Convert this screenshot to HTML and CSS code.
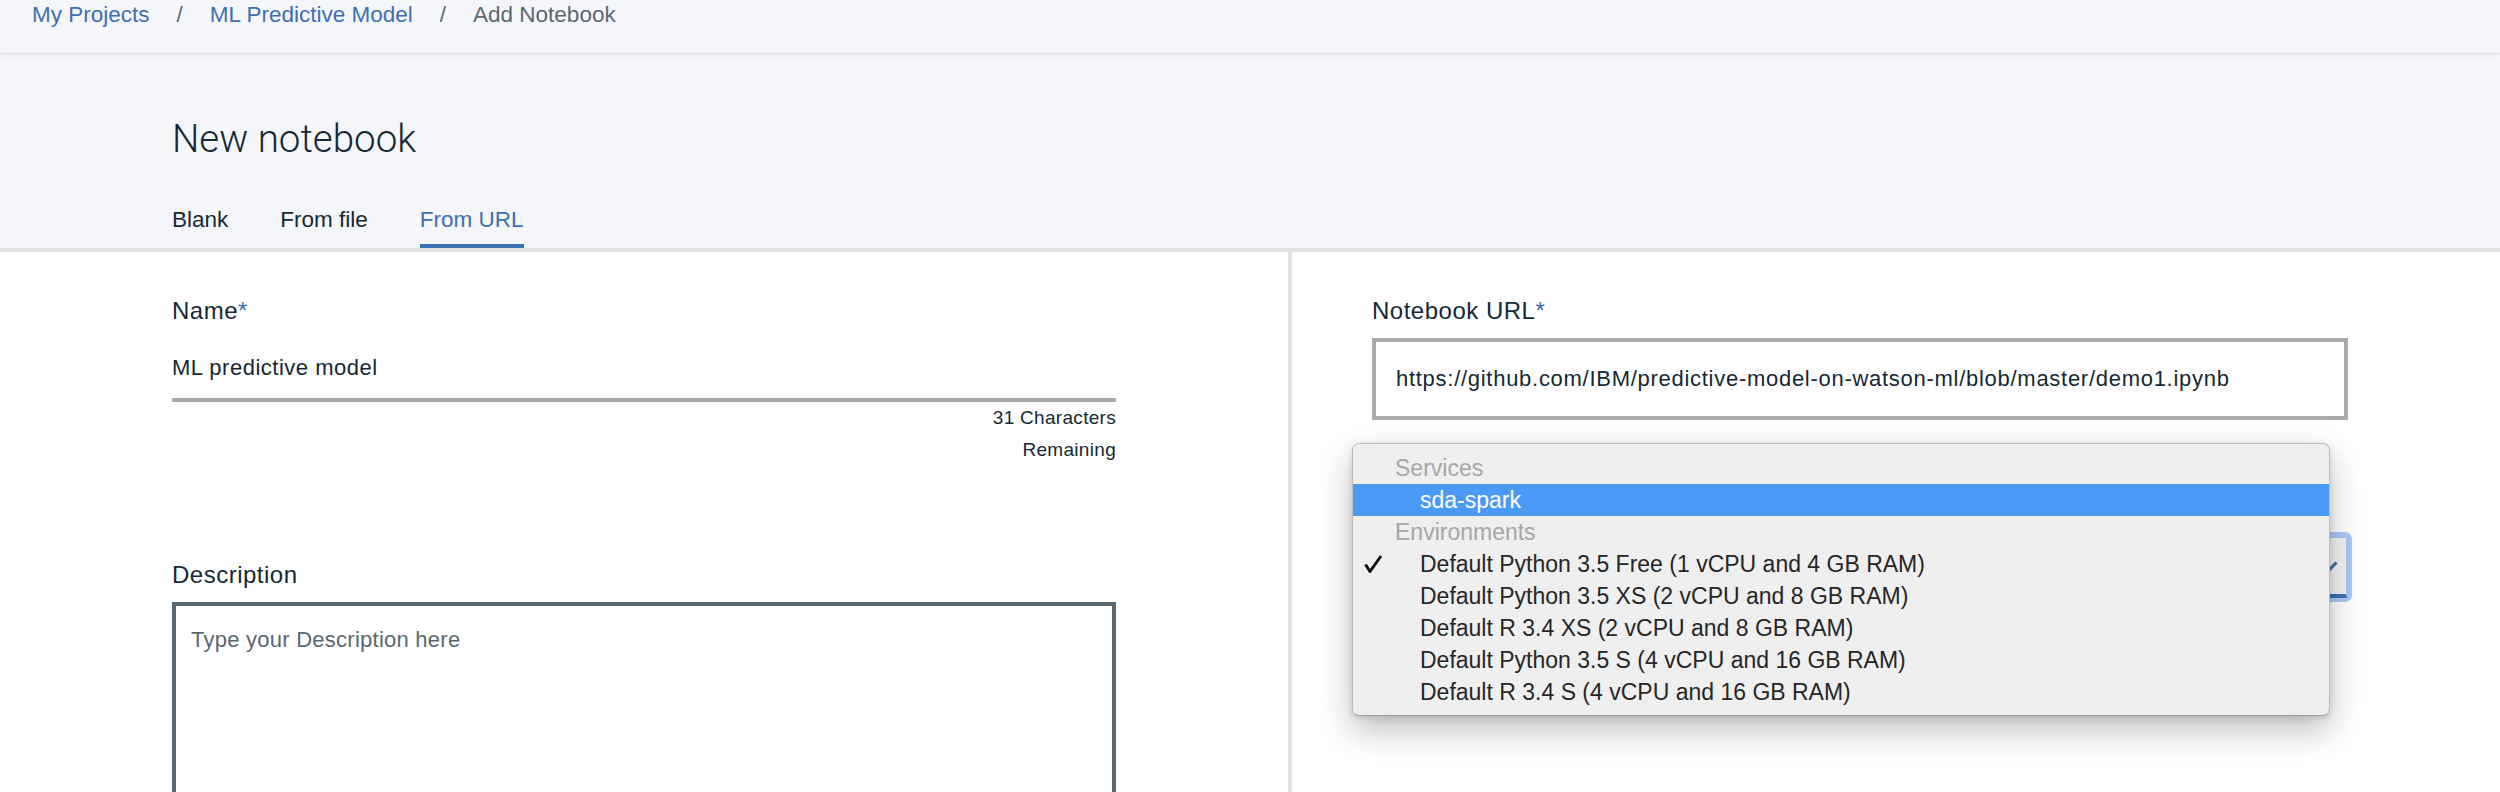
FILE: index.html
```html
<!DOCTYPE html>
<html lang="en">
<head>
<meta charset="utf-8">
<title>Add Notebook</title>
<link rel="stylesheet" href="styles.css">
</head>
<body>
<header class="topbar">
  <nav class="crumbs">
    <a class="crumb-link">My Projects</a><span class="sep">/</span><a class="crumb-link">ML Predictive Model</a><span class="sep">/</span><span class="crumb-current">Add Notebook</span>
  </nav>
</header>
<section class="hero">
  <h1 class="title">New notebook</h1>
  <div class="tabs">
    <div class="tab">Blank</div>
    <div class="tab">From file</div>
    <div class="tab active">From URL</div>
  </div>
</section>
<main class="content">
  <div class="col col-left">
    <div class="label">Name<span class="req">*</span></div>
    <div class="line-input">ML predictive model</div>
    <div class="counter">31 Characters<br>Remaining</div>
    <div class="label desc-label">Description</div>
    <div class="textarea">Type your Description here</div>
  </div>
  <div class="divider"></div>
  <div class="col col-right">
    <div class="label">Notebook URL<span class="req">*</span></div>
    <div class="box-input">https://github.com/IBM/predictive-model-on-watson-ml/blob/master/demo1.ipynb</div>
    <div class="select">
      <svg class="chevron" width="16" height="10" viewBox="0 0 16 10"><polyline points="1.5,1.5 8,8 14.5,1.5" fill="none" stroke="#3d70b2" stroke-width="3"/></svg>
    </div>
    <div class="popup">
      <div class="grp">Services</div>
      <div class="opt selected"><span class="check-cell"></span><span>sda-spark</span></div>
      <div class="grp">Environments</div>
      <div class="opt"><span class="check-cell"><svg class="check" width="19" height="18" viewBox="0 0 19 18"><path d="M1.5 9.5 L6 16.5 L17 1" fill="none" stroke="#111" stroke-width="3" stroke-linejoin="round"/></svg></span><span>Default Python 3.5 Free (1 vCPU and 4 GB RAM)</span></div>
      <div class="opt"><span class="check-cell"></span><span>Default Python 3.5 XS (2 vCPU and 8 GB RAM)</span></div>
      <div class="opt"><span class="check-cell"></span><span>Default R 3.4 XS (2 vCPU and 8 GB RAM)</span></div>
      <div class="opt"><span class="check-cell"></span><span>Default Python 3.5 S (4 vCPU and 16 GB RAM)</span></div>
      <div class="opt"><span class="check-cell"></span><span>Default R 3.4 S (4 vCPU and 16 GB RAM)</span></div>
    </div>
  </div>
</main>
</body>
</html>
```
FILE: styles.css
```css
html, body {
  margin: 0;
  padding: 0;
}
body {
  width: 2500px;
  height: 792px;
  overflow: hidden;
  background: #ffffff;
  font-family: "Liberation Sans", Arial, sans-serif;
  color: #152935;
}

/* Top breadcrumb bar */
.topbar {
  height: 53px;
  background: #f5f6fa;
  border-bottom: 1px solid #dcdee2;
  box-shadow: 0 2px 4px rgba(0, 0, 0, 0.05);
  position: relative;
  z-index: 1;
}
.crumbs {
  padding-left: 32px;
  font-size: 22.5px;
  line-height: 30px;
  white-space: nowrap;
}
.crumb-link {
  color: #3d70b2;
  text-decoration: none;
}
.sep {
  color: #5a6872;
  margin: 0 27px;
}
.crumb-current {
  color: #5a6872;
}

/* Title and tabs area */
.hero {
  background: #f5f6fa;
  padding: 63px 0 0 172px;
  border-bottom: 4px solid #dfe1e5;
}
.title {
  margin: 0;
  font-family: Roboto, "Liberation Sans", sans-serif;
  font-weight: 300;
  font-size: 38.5px;
  line-height: 44px;
  color: #152935;
}
.tabs {
  display: flex;
  gap: 52px;
  margin-top: 45px;
}
.tab {
  font-size: 22.5px;
  line-height: 28px;
  padding-bottom: 10px;
  border-bottom: 4px solid transparent;
  color: #152935;
}
.tab.active {
  color: #3d70b2;
  border-bottom-color: #3d70b2;
}

/* Form content */
.content {
  display: grid;
  grid-template-columns: 1288px 4px 1fr;
  height: 540px;
  overflow: hidden;
}
.col {
  padding-top: 44px;
  box-sizing: border-box;
}
.col-left {
  padding-left: 172px;
  padding-right: 172px;
}
.col-right {
  padding-left: 80px;
  padding-right: 152px;
  position: relative;
}
.divider {
  background: #dfe3e6;
}
.label {
  font-size: 24px;
  line-height: 30px;
  letter-spacing: 0.5px;
  color: #152935;
}
.req {
  color: #3d70b2;
}
.line-input {
  margin-top: 28px;
  font-size: 22px;
  line-height: 28px;
  letter-spacing: 0.5px;
  padding-bottom: 16px;
  border-bottom: 4px solid #aaaaaa;
}
.counter {
  text-align: right;
  font-size: 19px;
  line-height: 32px;
  letter-spacing: 0.3px;
}
.desc-label {
  margin-top: 94px;
}
.textarea {
  margin-top: 12px;
  border: 4px solid #5a6872;
  padding: 20px 15px;
  height: 300px;
  font-size: 22px;
  line-height: 28px;
  letter-spacing: 0.25px;
  color: #5a6872;
}
.box-input {
  margin-top: 12px;
  border: 4px solid #aaaaaa;
  padding: 23px 20px;
  font-size: 22px;
  line-height: 28px;
  letter-spacing: 0.72px;
  white-space: nowrap;
}
.select {
  margin-top: 116px;
  height: 62px;
  box-sizing: border-box;
  border: 2px solid #a9c8f2;
  border-bottom: 4px solid #3d70b2;
  border-radius: 3px;
  background: #f4f4f4;
  box-shadow: 0 0 0 4px rgba(110, 165, 245, 0.6);
  display: flex;
  align-items: center;
  justify-content: flex-end;
  padding-right: 8px;
}

/* Native-looking dropdown menu overlay */
.popup {
  position: absolute;
  left: 60px;
  top: 191px;
  width: 978px;
  box-sizing: border-box;
  background: #efefef;
  border: 1px solid #bdbdbd;
  border-bottom-color: #9e9e9e;
  border-radius: 7px;
  padding: 8px 0 7px;
  box-shadow: 0 14px 34px rgba(0, 0, 0, 0.26), 0 2px 6px rgba(0, 0, 0, 0.12);
  font-size: 23px;
  line-height: 32px;
  color: #262626;
  z-index: 5;
}
.grp {
  padding-left: 42px;
  color: #a6a6a6;
  height: 32px;
}
.opt {
  display: flex;
  align-items: center;
  height: 32px;
  white-space: nowrap;
}
.opt.selected {
  background: #4c9af8;
  color: #ffffff;
}
.check-cell {
  width: 67px;
  flex: none;
  box-sizing: border-box;
  padding-left: 11px;
  display: flex;
  align-items: center;
}
.check {
  display: block;
}
```
